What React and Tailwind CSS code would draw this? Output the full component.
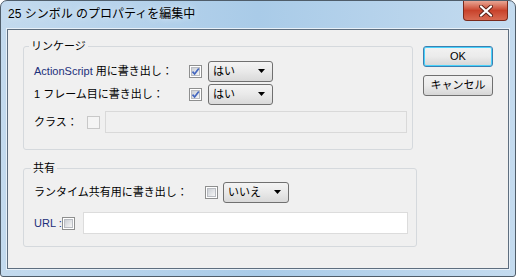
const FONT = "font-['Liberation_Sans','Noto_Sans_CJK_JP',sans-serif]"

function Check({ checked = false, disabled = false }) {
  return (
    <div
      className={`w-[13px] h-[13px] shrink-0 border flex items-center justify-center ${
        disabled ? 'border-[#c8c8c8] bg-[#f4f4f4]' : 'border-[#8e8f8f] bg-white'
      }`}
    >
      {!disabled && (
        <div className="w-[9px] h-[9px] bg-gradient-to-br from-[#cbcfd5] to-[#f6f6f6] border border-[#b9bcc2] relative">
          {checked && (
            <svg viewBox="0 0 9 9" className="absolute -left-px -top-px w-[9px] h-[9px]">
              <path d="M1.5 4.6 L3.6 7 L7.8 1.4" fill="none" stroke="#4467c0" strokeWidth="1.7" />
            </svg>
          )}
        </div>
      )}
    </div>
  )
}

function Combo({ value, width }) {
  return (
    <div
      className="h-[21px] rounded-[3px] border border-[#707070] bg-gradient-to-b from-[#f4f4f4] via-[#e9e9e9] to-[#d9d9d9] flex items-center justify-between pl-[4px] pr-[7px] text-[11px] text-black"
      style={{ width }}
    >
      <span>{value}</span>
      <svg viewBox="0 0 7 4" className="w-[7px] h-[4px]">
        <path d="M0 0 H7 L3.5 4 Z" fill="#000" />
      </svg>
    </div>
  )
}

function Button({ children, focused = false }) {
  return (
    <div
      className={`w-[70px] h-[21px] rounded-[3px] border flex items-center justify-center text-[11px] text-black bg-gradient-to-b from-[#f2f2f2] via-[#ebebeb] to-[#d6d6d6] ${
        focused ? 'border-[#3c7fb1] shadow-[inset_0_0_0_1px_#48d2fb]' : 'border-[#707070]'
      }`}
    >
      {children}
    </div>
  )
}

export default function App() {
  return (
    <div className={`w-[516px] h-[277px] ${FONT} bg-white`}>
      <div className="w-full h-full rounded-t-[7px] rounded-b-[3px] border border-[#4f5d6a] bg-gradient-to-r from-[#c3daee] via-[#a9cbe8] to-[#c4dbef] flex flex-col pl-[6px] pr-[6px]">
        {/* Title bar */}
        <div className="h-[28px] flex items-start justify-between shrink-0">
          <div className="pl-[1px] pt-[6px] text-[12px] leading-[14px] text-black [text-shadow:0_0_6px_#eaf3fb]">
            25 シンボル のプロパティを編集中
          </div>
          <div className="w-[45px] h-[20px] mr-[1px] rounded-b-[4px] border border-t-0 border-[#7a2a1c] bg-gradient-to-b from-[#e8a594] via-[#c8422b] to-[#d86a52] flex items-center justify-center">
            <svg viewBox="0 0 14 12" className="w-[14px] h-[12px]">
              <path d="M2 1.5 L12 10.5 M12 1.5 L2 10.5" stroke="#5a2016" strokeWidth="4" strokeLinecap="round" />
              <path d="M2 1.5 L12 10.5 M12 1.5 L2 10.5" stroke="#fff" strokeWidth="2.2" strokeLinecap="round" />
            </svg>
          </div>
        </div>

        {/* Client area */}
        <div className="h-[240px] border border-[#5e6e7f] bg-[#f0f0f0] flex pl-[15px] pt-[9px] text-[11px] text-black shadow-[0_0_0_1px_#e7f0f8]">
          <div className="w-[394px] flex flex-col">
            <fieldset className="w-[390px] border border-[#d5d9dd] rounded-[3px] pl-[10px] pr-[5px] pb-[16px]">
              <legend className="px-[2px] -ml-[5px] text-[11px] leading-[14px]">リンケージ</legend>
              <div className="mt-[7px] h-[22px] flex items-center">
                <span className="w-[155px]">
                  <span className="text-[#1c2f7a]">ActionScript</span> 用に書き出し：
                </span>
                <Check checked />
                <div className="ml-[6px]">
                  <Combo value="はい" width={65} />
                </div>
              </div>
              <div className="mt-[1px] h-[22px] flex items-center">
                <span className="w-[155px]">1 フレーム目に書き出し：</span>
                <Check checked />
                <div className="ml-[6px]">
                  <Combo value="はい" width={65} />
                </div>
              </div>
              <div className="mt-[6px] h-[22px] flex items-center">
                <span className="w-[53px]">クラス：</span>
                <Check disabled />
                <div className="ml-[5px] h-[22px] flex-1 border border-[#d9d9d9] bg-[#f0f0f0]" />
              </div>
            </fieldset>

            <fieldset className="mt-[11px] w-[394px] border border-[#d5d9dd] rounded-[3px] pl-[10px] pr-[8px] pb-[12px]">
              <legend className="px-[2px] -ml-[3px] text-[11px] leading-[14px]">共有</legend>
              <div className="mt-[6px] h-[22px] flex items-center">
                <span className="w-[171px]">ランタイム共有用に書き出し：</span>
                <Check />
                <div className="ml-[5px]">
                  <Combo value="いいえ" width={66} />
                </div>
              </div>
              <div className="mt-[9px] h-[22px] flex items-center">
                <span className="w-[28px] text-[#1c2f7a]">URL :</span>
                <Check />
                <div className="ml-[8px] h-[22px] flex-1 border border-[#dcdcdc] bg-white" />
              </div>
            </fieldset>
          </div>

          <div className="ml-[6px] pt-[7px] flex flex-col gap-[8px]">
            <Button focused>OK</Button>
            <Button>キャンセル</Button>
          </div>
        </div>
      </div>
    </div>
  )
}
